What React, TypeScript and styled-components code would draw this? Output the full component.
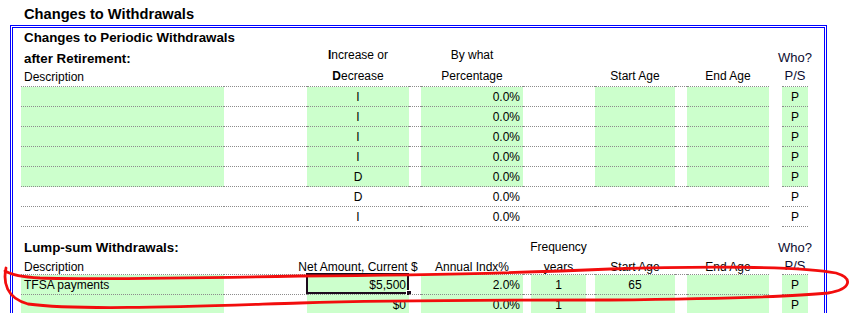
import React from "react";
import styled, { createGlobalStyle } from "styled-components";

const GlobalStyle = createGlobalStyle`
  html, body {
    margin: 0;
    padding: 0;
    background: #fff;
    overflow: hidden;
  }
  body {
    font-family: "Liberation Sans", Arial, sans-serif;
    color: #000;
  }
`;

// spreadsheet column widths, from the frame's inner left edge
const COLS = "8px 203px 83px 102px 12px 102px 8px 55px 9px 80px 12px 82px 13px 26px 16px";

type Align = "left" | "center" | "right";

interface CellProps {
    $col: number,
    $span?: number,
    $green?: boolean,
    $line?: boolean,
    $align?: Align,
    $pb?: number
}

const Page = styled.div`
    position: relative;
    width: 852px;
    height: 313px;
    overflow: hidden;
`

const Title = styled.div`
    box-sizing: border-box;
    height: 25px;
    padding: 6px 0 0 24px;
    font-size: 14.67px;
    font-weight: bold;
    line-height: 17px;
`

const Frame = styled.div`
    box-sizing: border-box;
    width: 817px;
    margin-left: 10px;
    border: 3px double #0000ff;
`

const Row = styled.div<{ $h: number }>`
    display: grid;
    grid-template-columns: ${COLS};
    height: ${p => p.$h}px;
`

const Cell = styled.div<CellProps>`
    grid-column: ${p => p.$col} / span ${p => p.$span ?? 1};
    grid-row: 1;
    position: relative;
    display: flex;
    align-items: flex-end;
    justify-content: ${p => p.$align === "center" ? "center" : p.$align === "right" ? "flex-end" : "flex-start"};
    box-sizing: border-box;
    min-width: 0;
    padding: 0 3px ${p => p.$pb ?? 2}px;
    background: ${p => p.$green ? "#ccffcc" : "transparent"};
    border-bottom: ${p => p.$line ? "1px dotted #8c8c8c" : "0"};
    font-size: 12px;
    line-height: 14px;
    white-space: nowrap;
`

const SectionLabel = styled(Cell)`
    font-size: 13.33px;
    font-weight: bold;
    line-height: 15px;
`

const WhoLabel = styled(Cell)`
    font-size: 13px;
    line-height: 15px;
    color: #0c0c30;
`

const Selection = styled.div`
    position: absolute;
    top: -2px;
    left: -1px;
    right: 0;
    bottom: 0;
    border: 2px solid #1c0a1c;
    pointer-events: none;
    &::after {
        content: "";
        position: absolute;
        right: -5px;
        bottom: -4px;
        width: 4px;
        height: 4px;
        background: #1c0a1c;
        border: 1px solid #fff;
    }
`

const Markup = styled.svg`
    position: absolute;
    left: 0;
    top: 0;
    pointer-events: none;
`

const periodic = [
    { dir: "I", green: true },
    { dir: "I", green: true },
    { dir: "I", green: true },
    { dir: "I", green: true },
    { dir: "D", green: true },
    { dir: "D", green: false },
    { dir: "I", green: false },
]

const lumpSums = [
    { desc: "TFSA payments", amount: "$5,500", index: "2.0%", freq: "1", start: "65", selected: true },
    { desc: "", amount: "$0", index: "0.0%", freq: "1", start: "", selected: false },
]

const PeriodicRow = ({ dir, green }: { dir: string, green: boolean }) => (
    <Row $h={20}>
        <Cell $col={2} $line $green={green} />
        <Cell $col={3} $line />
        <Cell $col={4} $line $green={green} $align="center">{dir}</Cell>
        <Cell $col={5} $line />
        <Cell $col={6} $line $green={green} $align="right">0.0%</Cell>
        <Cell $col={7} $span={3} $line />
        <Cell $col={10} $line $green={green} />
        <Cell $col={11} $line />
        <Cell $col={12} $line $green={green} />
        <Cell $col={14} $line $green={green} $align="center">P</Cell>
    </Row>
)

const LumpRow = ({ desc, amount, index, freq, start, selected }: typeof lumpSums[number]) => (
    <Row $h={20}>
        <Cell $col={2} $line $green>{desc}</Cell>
        <Cell $col={3} $line />
        <Cell $col={4} $line $green $align="right">
            {amount}
            {selected && <Selection />}
        </Cell>
        <Cell $col={5} $line />
        <Cell $col={6} $line $green $align="right">{index}</Cell>
        <Cell $col={7} $line />
        <Cell $col={8} $line $green $align="center">{freq}</Cell>
        <Cell $col={9} $line />
        <Cell $col={10} $line $green $align="center">{start}</Cell>
        <Cell $col={11} $line />
        <Cell $col={12} $line $green />
        <Cell $col={14} $line $green $align="center">P</Cell>
    </Row>
)

const App = () => {
    return (
        <Page>
            <GlobalStyle />
            <Title>Changes to Withdrawals</Title>
            <Frame>
                <Row $h={19}>
                    <SectionLabel $col={2} $span={5} $pb={2}>Changes to Periodic Withdrawals</SectionLabel>
                </Row>
                <Row $h={20}>
                    <SectionLabel $col={2} $pb={1}>after Retirement:</SectionLabel>
                    <Cell $col={4} $align="center" $pb={5}><b>I</b>ncrease or</Cell>
                    <Cell $col={6} $align="center" $pb={5}>By what</Cell>
                    <WhoLabel $col={14} $align="center" $pb={2}>Who?</WhoLabel>
                </Row>
                <Row $h={20}>
                    <Cell $col={2} $line $pb={2}>Description</Cell>
                    <Cell $col={3} $line />
                    <Cell $col={4} $line $align="center" $pb={3}><b>D</b>ecrease</Cell>
                    <Cell $col={5} $line />
                    <Cell $col={6} $line $align="center" $pb={3}>Percentage</Cell>
                    <Cell $col={7} $span={3} $line />
                    <Cell $col={10} $line $align="center" $pb={3}>Start Age</Cell>
                    <Cell $col={11} $line />
                    <Cell $col={12} $line $align="center" $pb={3}>End Age</Cell>
                    <WhoLabel $col={14} $line $align="center" $pb={3}>P/S</WhoLabel>
                </Row>
                {periodic.map((r, k) => <PeriodicRow key={k} dir={r.dir} green={r.green} />)}

                <Row $h={8} />
                <Row $h={20}>
                    <SectionLabel $col={2} $pb={0}>Lump-sum Withdrawals:</SectionLabel>
                    <Cell $col={8} $align="center" $pb={1}>Frequency</Cell>
                    <WhoLabel $col={14} $align="center" $pb={0}>Who?</WhoLabel>
                </Row>
                <Row $h={20}>
                    <Cell $col={2} $line $pb={0}>Description</Cell>
                    <Cell $col={3} $line />
                    <Cell $col={4} $line $align="center" $pb={0}>Net Amount, Current $</Cell>
                    <Cell $col={5} $line />
                    <Cell $col={6} $line $align="center" $pb={0}>Annual Indx%</Cell>
                    <Cell $col={7} $line />
                    <Cell $col={8} $line $align="center" $pb={0}>years</Cell>
                    <Cell $col={9} $line />
                    <Cell $col={10} $line $align="center" $pb={0}>Start Age</Cell>
                    <Cell $col={11} $line />
                    <Cell $col={12} $line $align="center" $pb={0}>End Age</Cell>
                    <WhoLabel $col={14} $line $align="center" $pb={1}>P/S</WhoLabel>
                </Row>
                {lumpSums.map((r, k) => <LumpRow key={k} {...r} />)}
            </Frame>

            <Markup width={852} height={313} viewBox="0 0 852 313">
                <path
                    d="M 6 268 C 3 282, 6 298, 28 304 C 80 311, 200 306, 300 303 C 400 300, 500 300, 610 300 C 700 299, 790 297, 828 293 C 852 289, 853 278, 836 273 C 800 266, 700 266, 610 269 C 520 273, 440 275, 300 276 C 200 278, 100 280, 40 278 C 22 277, 10 274, 5 271"
                    fill="none"
                    stroke="#f20d0d"
                    strokeWidth={2.8}
                    strokeLinecap="round"
                    strokeLinejoin="round"
                />
            </Markup>
        </Page>
    )
}

export default App
